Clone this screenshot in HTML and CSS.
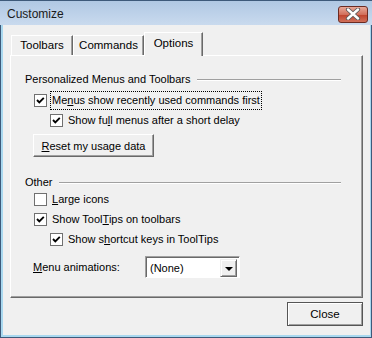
FILE: index.html
```html
<!DOCTYPE html>
<html lang="en">
<head>
  <meta charset="UTF-8">
  <title>Customize</title>
  <link rel="stylesheet" href="styles.css">
</head>
<body>
  <div class="window">
    <div class="titlebar">
      <span class="title">Customize</span>
      <div class="close-x">
        <svg width="16" height="12" viewBox="0 0 16 12">
          <path d="M3 1.5 L13 10.5 M13 1.5 L3 10.5" stroke="#5a5a5a" stroke-width="4.2" stroke-linecap="round"/>
          <path d="M3 1.5 L13 10.5 M13 1.5 L3 10.5" stroke="#fff" stroke-width="2.4" stroke-linecap="round"/>
        </svg>
      </div>
    </div>

    <div class="client">
      <div class="tabs">
        <div class="tab tab-toolbars">Toolbars</div>
        <div class="tab tab-commands">Commands</div>
        <div class="tab tab-options active">Options</div>
      </div>

      <div class="panel">
        <div class="group-title">
          <span>Personalized Menus and Toolbars</span>
          <span class="rule"></span>
        </div>
        <div class="row first">
          <span class="check on"></span>
          <span class="focus">Me<u>n</u>us show recently used commands first</span>
        </div>
        <div class="row sub">
          <span class="check on"></span>
          <span>Show fu<u>l</u>l menus after a short delay</span>
        </div>
        <div class="btn reset"><u>R</u>eset my usage data</div>

        <div class="group-title other">
          <span>Other</span>
          <span class="rule"></span>
        </div>
        <div class="row">
          <span class="check"></span>
          <span><u>L</u>arge icons</span>
        </div>
        <div class="row">
          <span class="check on"></span>
          <span>Show Tool<u>T</u>ips on toolbars</span>
        </div>
        <div class="row sub">
          <span class="check on"></span>
          <span>Show s<u>h</u>ortcut keys in ToolTips</span>
        </div>
        <div class="anim-row">
          <span class="anim-label"><u>M</u>enu animations:</span>
          <div class="combo">
            <span class="combo-text">(None)</span>
            <span class="combo-btn"></span>
          </div>
        </div>
      </div>

      <div class="footer">
        <div class="btn close">Close</div>
      </div>
    </div>
  </div>
</body>
</html>
```

FILE: styles.css
```css
html, body {
  margin: 0;
  padding: 0;
}
body {
  font-family: "Liberation Sans", Arial, sans-serif;
  font-size: 11px;
  color: #000;
  background: #fff;
}
.window {
  width: 372px;
  height: 338px;
  box-sizing: border-box;
  border: 1px solid #3e5a7a;
  background: #a9d8ef;
  display: flex;
  flex-direction: column;
}
.titlebar {
  height: 24px;
  flex: none;
  display: flex;
  align-items: center;
  box-sizing: border-box;
  background: linear-gradient(#b0c8e3, #c9daee);
  margin: 0 -1px 0 -2px;
  padding: 1px 4px 0 8px;
}
.title {
  font-size: 12px;
  color: #1a1a1a;
}
.close-x {
  margin-left: auto;
  margin-top: 1px;
  width: 30px;
  height: 17px;
  box-sizing: border-box;
  border: 1px solid #6b2b22;
  border-radius: 3px;
  background: linear-gradient(#e8a999, #d2705c 50%, #c0452f 55%, #d0705a);
  display: flex;
  align-items: center;
  justify-content: center;
}
.client {
  flex: 1;
  margin: 0 1px 2px 2px;
  background: #f0f0f0;
  padding: 8px 7px 5px 7px;
  display: flex;
  flex-direction: column;
}

/* tabs */
.tabs {
  height: 22px;
  display: flex;
  align-items: flex-end;
  padding-left: 1px;
  position: relative;
  z-index: 1;
}
.tab {
  height: 20px;
  box-sizing: border-box;
  border-top: 1px solid #fff;
  border-left: 1px solid #fff;
  border-right: 1px solid #696969;
  box-shadow: inset -1px 0 #a0a0a0;
  text-align: center;
  line-height: 19px;
  font-size: 11.5px;
}
.tab-toolbars { width: 62px; }
.tab-commands { width: 71px; }
.tab-options { width: 59px; }
.tab.active {
  height: 24px;
  margin-bottom: -1px;
  background: #f0f0f0;
  line-height: 21px;
}
.panel {
  flex: 1;
  border-top: 1px solid #fff;
  border-left: 1px solid #fff;
  border-right: 1px solid #696969;
  border-bottom: 1px solid #696969;
  box-shadow: inset -1px -1px #a0a0a0;
  padding: 16px 21px 0 14px;
}

/* group headers */
.group-title {
  display: flex;
  align-items: center;
  height: 14px;
  line-height: 14px;
}
.group-title .rule {
  flex: 1;
  margin: 1px 0 0 6px;
  border-top: 1px solid #a0a0a0;
  border-bottom: 1px solid #fff;
}
.group-title.other {
  margin-top: 18px;
}

/* checkbox rows */
.row {
  height: 20px;
  display: flex;
  align-items: center;
  padding-left: 9px;
}
.row.first { margin-top: 4px; }
.row.sub { padding-left: 25px; }
.check {
  width: 13px;
  height: 13px;
  box-sizing: border-box;
  border: 1px solid #707070;
  background: #fff;
  margin-right: 5px;
  flex: none;
}
.check.on {
  background: #fff url("data:image/svg+xml,%3Csvg xmlns='http://www.w3.org/2000/svg' width='11' height='11'%3E%3Cpath d='M2 5 L4.3 7.3 L8.8 2.8' fill='none' stroke='%23000' stroke-width='1.9'/%3E%3C/svg%3E") no-repeat 0 0;
}
.focus {
  outline: 1px dotted #000;
  padding: 2px 1px 3px 1px;
  margin-left: -1px;
}

/* buttons */
.btn {
  box-sizing: border-box;
  height: 23px;
  display: flex;
  align-items: center;
  justify-content: center;
  background: #f0f0f0;
  border-top: 1px solid #fff;
  border-left: 1px solid #fff;
  border-right: 1px solid #696969;
  border-bottom: 1px solid #696969;
  box-shadow: inset -1px -1px #a0a0a0;
}
.btn.reset {
  width: 121px;
  margin: 4px 0 0 8px;
}
.footer {
  height: 32px;
  display: flex;
  justify-content: flex-end;
  align-items: flex-end;
}
.btn.close {
  width: 76px;
  height: 24px;
  border: 1px solid #555;
  outline: 1px solid #555;
  outline-offset: -1px;
  box-shadow: inset 1px 1px #fff, inset -1px -1px #a0a0a0;
  margin-bottom: 4px;
  font-size: 11.5px;
}

/* menu animations */
.anim-row {
  display: flex;
  align-items: center;
  margin-top: 7px;
  padding-left: 8px;
  height: 22px;
}
.anim-label {
  width: 112px;
}
.combo {
  width: 95px;
  height: 22px;
  box-sizing: border-box;
  border-top: 1px solid #a0a0a0;
  border-left: 1px solid #a0a0a0;
  border-right: 1px solid #fff;
  border-bottom: 1px solid #fff;
  box-shadow: inset 1px 1px #696969;
  background: #fff;
  display: flex;
  align-items: center;
  padding: 2px 2px 1px 4px;
}
.combo-text {
  flex: 1;
}
.combo-btn {
  width: 17px;
  height: 18px;
  box-sizing: border-box;
  background: #f0f0f0;
  border-top: 1px solid #f0f0f0;
  border-left: 1px solid #f0f0f0;
  border-right: 1px solid #696969;
  border-bottom: 1px solid #696969;
  box-shadow: inset 1px 1px #fff, inset -1px -1px #a0a0a0;
  position: relative;
}
.combo-btn::after {
  content: "";
  position: absolute;
  left: 4px;
  top: 7px;
  border-left: 4px solid transparent;
  border-right: 4px solid transparent;
  border-top: 4px solid #000;
}
```
